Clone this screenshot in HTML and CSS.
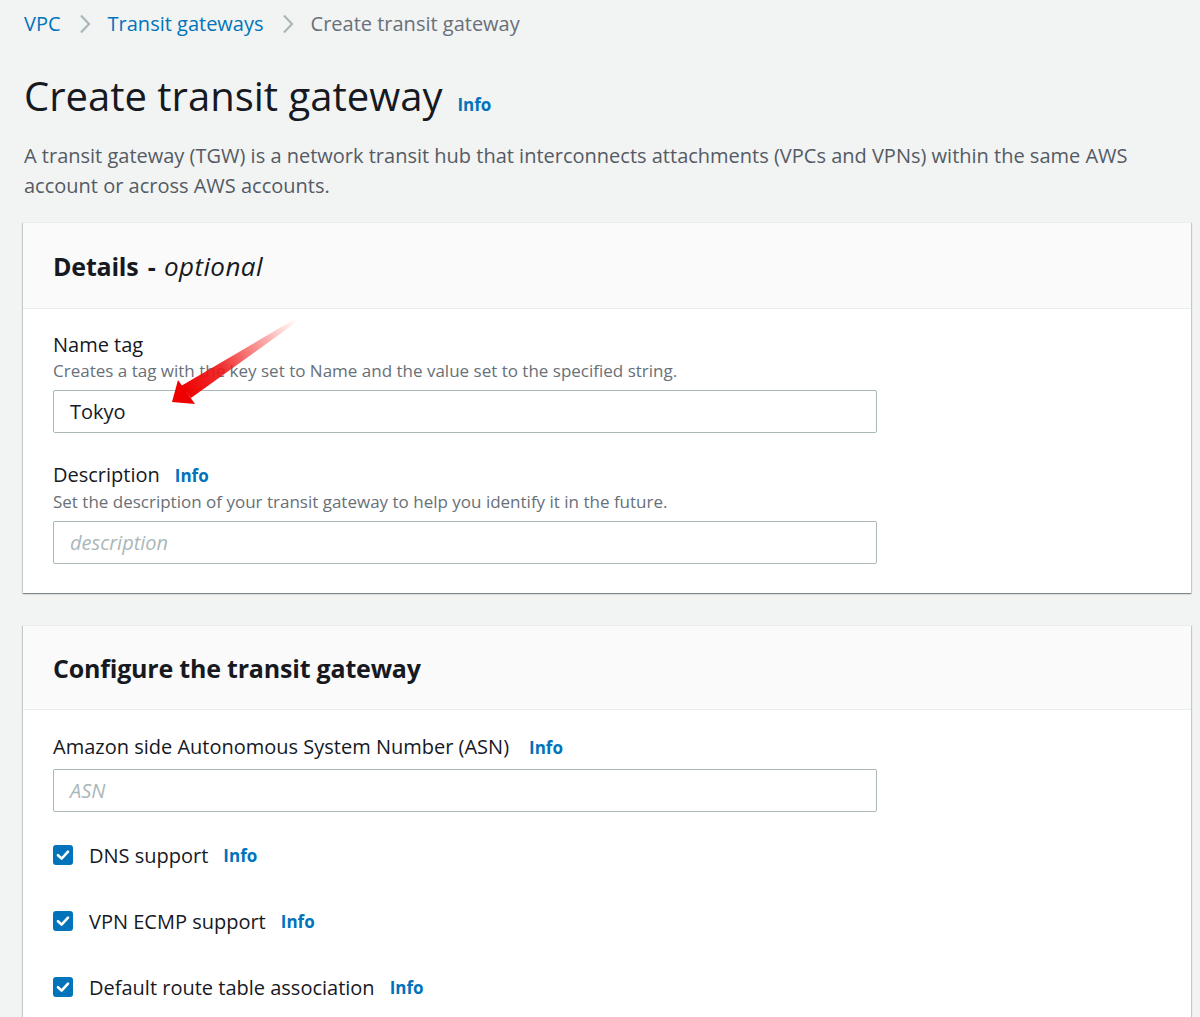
FILE: index.html
```html
<!DOCTYPE html>
<html lang="en">
<head>
<meta charset="utf-8">
<title>Create transit gateway</title>
<link rel="stylesheet" href="styles.css">
</head>
<body>
<div class="page">
  <nav class="breadcrumbs">
    <a class="crumb-link" href="#">VPC</a>
    <svg class="chev" width="14" height="22" viewBox="0 0 14 22"><path d="M3 2.5 L11 11 L3 19.5" fill="none" stroke="#aab7b8" stroke-width="2.2"/></svg>
    <a class="crumb-link" href="#">Transit gateways</a>
    <svg class="chev" width="14" height="22" viewBox="0 0 14 22"><path d="M3 2.5 L11 11 L3 19.5" fill="none" stroke="#aab7b8" stroke-width="2.2"/></svg>
    <span class="crumb-current">Create transit gateway</span>
  </nav>

  <header class="page-head">
    <h1 class="title">Create transit gateway</h1>
    <a class="info" href="#">Info</a>
  </header>
  <p class="intro">A transit gateway (TGW) is a network transit hub that interconnects attachments (VPCs and VPNs) within the same AWS account or across AWS accounts.</p>

  <section class="card">
    <div class="card-head card-head-details"><h2 class="card-title">Details <span class="dash">-</span> <em>optional</em></h2></div>
    <div class="card-body">
      <div class="field">
        <div class="label-row"><span class="label">Name tag</span></div>
        <div class="hint">Creates a tag with the key set to Name and the value set to the specified string.</div>
        <div class="input"><span class="value">Tokyo</span></div>
      </div>
      <div class="field">
        <div class="label-row"><span class="label">Description</span><a class="info info-sm" href="#">Info</a></div>
        <div class="hint">Set the description of your transit gateway to help you identify it in the future.</div>
        <div class="input"><span class="placeholder">description</span></div>
      </div>
    </div>
  </section>

  <section class="card">
    <div class="card-head card-head-config"><h2 class="card-title">Configure the transit gateway</h2></div>
    <div class="card-body card-body-config">
      <div class="field">
        <div class="label-row"><span class="label">Amazon side Autonomous System Number (ASN)</span><a class="info info-sm info-wide" href="#">Info</a></div>
        <div class="input input-tight"><span class="placeholder">ASN</span></div>
      </div>
      <div class="checks">
        <label class="check"><span class="box"><svg width="20" height="20" viewBox="0 0 20 20"><path d="M5 10.2 L8.6 13.6 L15 6.6" fill="none" stroke="#fff" stroke-width="2.6" stroke-linecap="round" stroke-linejoin="round"/></svg></span><span class="check-label">DNS support</span><a class="info info-sm" href="#">Info</a></label>
        <label class="check"><span class="box"><svg width="20" height="20" viewBox="0 0 20 20"><path d="M5 10.2 L8.6 13.6 L15 6.6" fill="none" stroke="#fff" stroke-width="2.6" stroke-linecap="round" stroke-linejoin="round"/></svg></span><span class="check-label">VPN ECMP support</span><a class="info info-sm" href="#">Info</a></label>
        <label class="check"><span class="box"><svg width="20" height="20" viewBox="0 0 20 20"><path d="M5 10.2 L8.6 13.6 L15 6.6" fill="none" stroke="#fff" stroke-width="2.6" stroke-linecap="round" stroke-linejoin="round"/></svg></span><span class="check-label">Default route table association</span><a class="info info-sm" href="#">Info</a></label>
      </div>
    </div>
  </section>

  <svg class="annotation" width="140" height="100" viewBox="0 0 140 100">
    <defs>
      <linearGradient id="arrowGrad" x1="134" y1="2" x2="22" y2="76" gradientUnits="userSpaceOnUse">
        <stop offset="0" stop-color="#ff3a3a" stop-opacity="0"/>
        <stop offset="0.3" stop-color="#f43030" stop-opacity="0.45"/>
        <stop offset="0.65" stop-color="#ee1a1a" stop-opacity="0.9"/>
        <stop offset="1" stop-color="#ee0000" stop-opacity="1"/>
      </linearGradient>
    </defs>
    <path d="M133 1 L136 3 L29 80 L19 68 Z" fill="url(#arrowGrad)"/>
    <path d="M10 84 L16 62 L33 86 Z" fill="#ee0000"/>
  </svg>
</div>
</body>
</html>
```

FILE: styles.css
```css
* { box-sizing: border-box; }
html, body { margin: 0; padding: 0; }
body {
  background: #f2f3f3;
  font-family: "Open Sans", "Noto Sans", Arial, sans-serif;
  color: #16191f;
  width: 1200px;
  height: 1017px;
  overflow: hidden;
}
.page {
  position: relative;
  padding: 0 9px 0 23px;
}
a { text-decoration: none; }

.breadcrumbs {
  display: flex;
  align-items: center;
  height: 47px;
  padding-left: 1px;
  font-size: 20px;
}
.crumb-link { color: #0073bb; }
.crumb-current { color: #687078; }
.chev { margin: 0 16px 0 17px; }

.page-head {
  display: flex;
  align-items: baseline;
  margin-top: 21px;
  padding-left: 1px;
}
.title {
  margin: 0;
  font-size: 40px;
  font-weight: 400;
  line-height: 56px;
  color: #16191f;
}
.info {
  color: #0073bb;
  font-weight: 700;
  font-size: 17px;
  margin-left: 15px;
}
.info-sm { font-size: 17px; margin-left: 15px; }
.info-wide { margin-left: 20px; }

.intro {
  margin: 17px 0 21px 1px;
  font-size: 20px;
  line-height: 30px;
  color: #545b64;
  max-width: 1130px;
}

.card {
  background: #fff;
  margin-bottom: 32px;
  box-shadow: 0 1px 1px 0 rgba(0, 28, 36, 0.3), 1px 1px 1px 0 rgba(0, 28, 36, 0.15), -1px 1px 1px 0 rgba(0, 28, 36, 0.15);
  border-top: 1px solid #eaeded;
}
.card-head {
  background: #fafafa;
  height: 85px;
  display: flex;
  align-items: center;
  padding: 0 30px;
  border-bottom: 1px solid #eaeded;
}
.card-head-details { height: 86px; }
.card-head-config { height: 84px; }
.card-title {
  margin: 0;
  font-size: 25px;
  font-weight: 700;
  letter-spacing: -0.2px;
  color: #16191f;
}
.card-title .dash { margin: 0 2px 0 3px; }
.card-title em { font-weight: 400; font-style: italic; letter-spacing: 0.4px; font-size: 26px; }

.card-body {
  padding: 22px 30px 29px;
}
.card-body-config { padding-top: 23px; }
.field { width: 824px; margin-bottom: 28px; }
.field:last-child { margin-bottom: 0; }
.label-row {
  display: flex;
  align-items: baseline;
  line-height: 28px;
}
.label { font-size: 20px; color: #16191f; }
.hint {
  font-size: 17px;
  line-height: 24px;
  color: #687078;
  margin-bottom: 7px;
}
.input {
  height: 43px;
  border: 1px solid #aab7b8;
  border-radius: 2px;
  background: #fff;
  display: flex;
  align-items: center;
  padding: 0 16px;
  font-size: 20px;
}
.input-tight { margin-top: 7px; }
.value { color: #16191f; }
.placeholder { color: #aab7b8; font-style: italic; }

.checks {
  margin-top: 24px;
  display: flex;
  flex-direction: column;
  gap: 36px;
}
.check {
  display: flex;
  align-items: center;
  height: 30px;
}
.box {
  width: 20px;
  height: 20px;
  border-radius: 3px;
  background: #0073bb;
  display: inline-flex;
  margin-right: 16px;
}
.check-label { font-size: 20px; color: #16191f; }

.annotation {
  position: absolute;
  left: 162px;
  top: 318px;
}
```
